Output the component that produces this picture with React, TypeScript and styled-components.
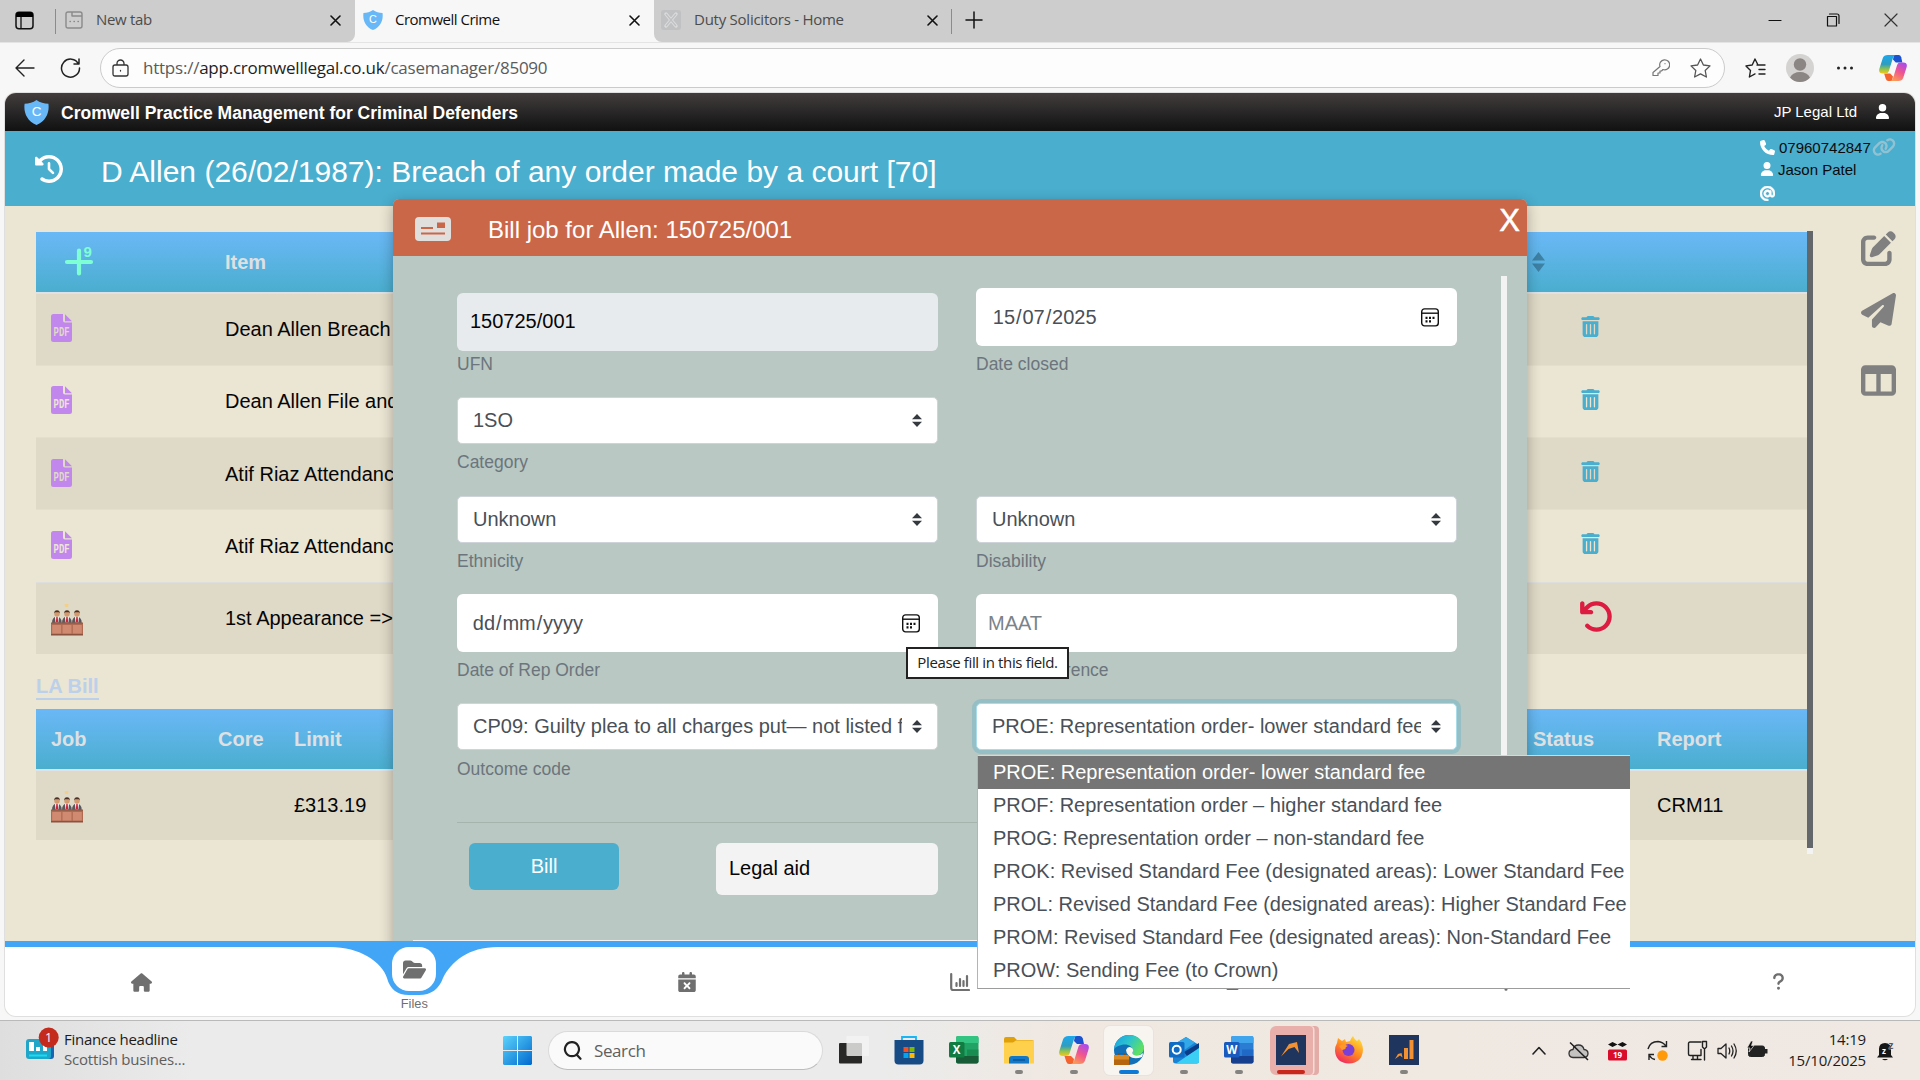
import React from "react";
import styled, { createGlobalStyle } from "styled-components";
import {
  FaPenToSquare, FaPaperPlane, FaTableColumns, FaTrashCan, FaArrowRotateLeft, FaUser, FaPhone, FaAt, FaLink,
  FaHouse, FaFolderOpen, FaCalendarXmark, FaClockRotateLeft, FaQuestion, FaMobile, FaExclamation,
} from "react-icons/fa6";

const sans = `"Liberation Sans", Arial, sans-serif`;
const ui = `"Open Sans", "Noto Sans", sans-serif`;
const blue = "#4aaece";

const Global = createGlobalStyle`
  * { box-sizing: border-box; }
  body { margin: 0; background: #f7f7f7; overflow: hidden; }
  svg { display: block; flex: none; }
`;

const Screen = styled.div`
  width: 1920px;
  height: 1080px;
  display: flex;
  flex-direction: column;
  background: #f7f7f7;
  font-family: ${sans};
  white-space: nowrap;
`;

const Gap = styled.div<{ $w: number }>`
  width: ${(p) => p.$w}px;
  flex: none;
`;

/* ---------- browser chrome ---------- */
const TabStrip = styled.div`
  height: 42px;
  flex: none;
  display: flex;
  align-items: center;
  background: #f7f7f7;
  font: 15px/22px ${ui};
`;
const StripPart = styled.div<{ $w?: number; $left?: boolean }>`
  ${(p) => (p.$w ? `width: ${p.$w}px;` : "flex: 1;")}
  height: 42px;
  display: flex;
  align-items: center;
  padding-bottom: 2px;
  background: #cdcdcd;
  border-radius: ${(p) => (p.$left ? "0 0 8px 0" : "0 0 0 8px")};
  color: #4c4c4c;
`;
const ActiveTab = styled.div`
  width: 299px;
  height: 42px;
  display: flex;
  align-items: center;
  padding: 0 14px 2px 8px;
  color: #111;
`;
const TabLabel = styled.span<{ $ls?: number }>`
  flex: 1;
  letter-spacing: ${(p) => p.$ls ?? -0.5}px;
  padding-bottom: 3px;
`;
const TabLabelBox = styled.div`
  width: 233px;
  display: flex;
`;
const Rule = styled.div`
  width: 1px;
  height: 25px;
  margin-top: 2px;
  background: #8b8b8b;
`;
const Toolbar = styled.div`
  height: 51px;
  flex: none;
  display: flex;
  align-items: center;
  border-top: 1px solid #e4e4e4;
  padding: 0 12px 0 15px;
`;
const Address = styled.div`
  width: 1625px;
  height: 40px;
  margin-left: 19px;
  border: 1px solid #cbcbcb;
  border-radius: 20px;
  background: #fdfdfd;
  display: flex;
  align-items: center;
  padding: 0 13px 0 11px;
`;
const Url = styled.span`
  flex: 1;
  margin-left: 14px;
  font: 17px/24px ${ui};
  letter-spacing: -0.23px;
  color: #5b5b5b;
  b { font-weight: 400; color: #1f1f1f; }
`;

/* ---------- page ---------- */
const Page = styled.div`
  position: relative;
  width: 1910px;
  height: 923px;
  flex: none;
  margin-left: 5px;
  border-radius: 11px;
  overflow: hidden;
  background: #ebe5d3;
  box-shadow: 0 0 0 1px #dfdfdf;
  display: flex;
  flex-direction: column;
`;
const BlackBar = styled.div`
  height: 38px;
  flex: none;
  display: flex;
  align-items: center;
  padding: 0 25px 0 19px;
  background: linear-gradient(#433d3d, #2b2929 45%, #111);
  color: #fff;
  font-size: 15px;
`;
const Brand = styled.div`
  flex: 1;
  margin-left: 12px;
  padding-top: 3px;
  font-weight: 700;
  font-size: 17.5px;
`;
const FirmName = styled.span`
  padding-bottom: 2px;
`;
const UserBadge = styled.div`
  padding-bottom: 2px;
`;
const TitleBar = styled.div`
  height: 75px;
  flex: none;
  display: flex;
  background: ${blue};
  color: #fff;
  padding: 0 20px 0 30px;
`;
const CaseTitle = styled.div`
  flex: 1;
  padding: 23px 0 0 38px;
  font-size: 30px;
  line-height: 36px;
`;
const Contact = styled.div`
  width: 135px;
  padding-top: 5px;
  font-size: 15px;
  color: #0a0a0a;
`;
const ContactLine = styled.div<{ $mt?: number }>`
  height: 22px;
  margin-top: ${(p) => p.$mt ?? 0}px;
  display: flex;
  align-items: center;
  gap: 4px;
  svg { color: #fff; }
  svg + span + svg { color: #92c2d2; margin-left: -3px; }
`;
const Main = styled.div`
  height: 735px;
  flex: none;
  display: flex;
  padding: 25px 19px 0 31px;
`;
const Tables = styled.div`
  width: 1771px;
  padding-top: 1px;
  display: flex;
  flex-direction: column;
`;
const HeadRow = styled.div`
  height: 62px;
  flex: none;
  display: flex;
  align-items: center;
  background: linear-gradient(#6ab8f7, ${blue});
  border-bottom: 2px solid #dee2e6;
  color: #dee0e2;
  font-size: 20px;
  font-weight: 700;
`;
const BodyRow = styled.div<{ $h: number; $shade?: boolean; $line?: boolean; $pt?: number }>`
  height: ${(p) => p.$h}px;
  flex: none;
  display: flex;
  border-top: ${(p) => (p.$line ? "1px solid #dedfdc" : "none")};
  background: ${(p) => (p.$shade ? "#dfd9c7" : "transparent")};
  font-size: 20px;
  line-height: 30px;
  color: #050505;
  padding-top: ${(p) => p.$pt ?? 20}px;
`;
const Cell = styled.div<{ $w: number; $pad?: number }>`
  width: ${(p) => p.$w}px;
  flex: none;
  padding-left: ${(p) => p.$pad ?? 0}px;
`;
const PlusCell = styled(Cell)`
  display: flex;
  align-items: center;
`;
const IconNudge = styled.div<{ $y: number }>`
  margin-top: ${(p) => p.$y}px;
`;
const SectionTitle = styled.div`
  width: 63px;
  height: 26px;
  margin: 20px 0 9px;
  border-bottom: 2px solid #bcd0ea;
  color: #bcd0ea;
  font-size: 20px;
  font-weight: 700;
  line-height: 24px;
`;
const ScrollTrack = styled.div`
  width: 6px;
  height: 623px;
  background: #f3f3f3;
`;
const ScrollThumb = styled.div`
  height: 617px;
  background: #646769;
`;
const SideTools = styled.div`
  margin-left: 48px;
  display: flex;
  flex-direction: column;
  color: #808080;
`;

/* ---------- dialog ---------- */
const Dialog = styled.div`
  position: absolute;
  left: 388px;
  top: 106px;
  width: 1134px;
  height: 742px;
  border-radius: 6px 6px 0 0;
  overflow: hidden;
  background: #b9c8c2;
  display: flex;
  flex-direction: column;
`;
const DialogShadow = styled.div`
  position: absolute;
  left: 388px;
  top: 106px;
  width: 1134px;
  height: 760px;
  border-radius: 6px;
  box-shadow: 0 4px 14px rgba(0, 0, 0, 0.3);
`;
const DialogHead = styled.div`
  height: 57px;
  flex: none;
  display: flex;
  background: #cb6749;
  color: #fff;
  padding: 0 7px 0 22px;
`;
const DialogTitle = styled.div`
  flex: 1;
  padding: 17px 0 0 37px;
  font-size: 24px;
  line-height: 28px;
`;
const DialogClose = styled.div`
  font-size: 31px;
  line-height: 44px;
  -webkit-text-stroke: 0.5px #fff;
`;
const DialogBody = styled.div`
  flex: 1;
  display: flex;
  padding: 20px 20px 0 64px;
`;
const Form = styled.div`
  width: 1000px;
  margin-right: 44px;
  padding-top: 12px;
`;
const FormRow = styled.div<{ $h: number }>`
  height: ${(p) => p.$h}px;
  display: flex;
  gap: 38px;
`;
const Field = styled.div<{ $top?: number }>`
  width: 481px;
  padding-top: ${(p) => p.$top ?? 0}px;
`;
const Input = styled.div<{ $bg?: string; $fg?: string; $pad?: number; $lift?: number }>`
  height: 58px;
  border-radius: 6px;
  background: ${(p) => p.$bg ?? "#fff"};
  color: ${(p) => p.$fg ?? "#495057"};
  padding: 0 18px ${(p) => p.$lift ?? 0}px ${(p) => p.$pad ?? 15}px;
  display: flex;
  justify-content: space-between;
  align-items: center;
  font-size: 20px;
`;
const DateParts = styled.span`
  i { font-style: normal; padding: 0 1px 0 0.8px; }
`;
const Select = styled.div<{ $focus?: boolean }>`
  height: 47px;
  border-radius: 5px;
  border: 1px solid ${(p) => (p.$focus ? "#a9dbe9" : "#ced4da")};
  box-shadow: ${(p) => (p.$focus ? "0 0 0 4px rgba(74,174,206,0.32)" : "none")};
  background: #fff;
  color: #495057;
  padding: 0 14px 0 15px;
  display: flex;
  align-items: center;
  font-size: 20px;
  line-height: 30px;
`;
const SelectText = styled.span`
  width: 429px;
  margin-right: 10px;
  padding-bottom: 1px;
  overflow: hidden;
`;
const Label = styled.div<{ $mt?: number }>`
  margin-top: ${(p) => p.$mt ?? 5}px;
  font-size: 17.5px;
  line-height: 26px;
  color: #6c757d;
`;
const FormFoot = styled.div`
  border-top: 1px solid #a6b4ae;
  padding: 20px 0 0 12px;
  display: flex;
  gap: 97px;
`;
const BillButton = styled.div`
  width: 150px;
  height: 47px;
  border-radius: 6px;
  background: ${blue};
  color: #fff;
  font-size: 20px;
  line-height: 47px;
  text-align: center;
`;
const Funding = styled.div`
  width: 222px;
  height: 52px;
  border-radius: 6px;
  background: #f3f3f3;
  color: #050505;
  font-size: 20px;
  line-height: 50px;
  padding-left: 13px;
`;
const BodyScroll = styled.div`
  width: 6px;
  height: 640px;
  background: #f3f3f3;
`;
const BottomScroll = styled.div`
  height: 1px;
  margin: 0 20px;
  background: #f3f3f3;
`;
const Options = styled.div`
  position: absolute;
  z-index: 3;
  left: 972px;
  top: 662px;
  width: 653px;
  height: 234px;
  overflow: hidden;
  background: #fff;
  border: 1px solid #b4b4b4;
  border-right: 0;
  border-top-color: #d7d7d7;
  border-bottom-color: #9c9c9c;
`;
const Option = styled.div<{ $on?: boolean }>`
  height: 33px;
  padding-left: 15px;
  font-size: 20px;
  line-height: 33px;
  background: ${(p) => (p.$on ? "#757575" : "transparent")};
  color: ${(p) => (p.$on ? "#fff" : "#495057")};
`;
const Tooltip = styled.div`
  position: absolute;
  z-index: 4;
  left: 901px;
  top: 554px;
  width: 163px;
  height: 32px;
  border: 2px solid #222;
  background: #fff;
  color: #222;
  font: 15px/27px ${ui};
  letter-spacing: -0.36px;
  text-align: center;
`;

/* ---------- bottom navigation ---------- */
const BottomNav = styled.div`
  position: relative;
  z-index: 2;
  height: 75px;
  flex: none;
  border-top: 6px solid #43a5f5;
  background: #fff;
  color: #6f6f6f;
  display: flex;
`;
const NavItem = styled.div<{ $pt?: number }>`
  flex: 1;
  display: flex;
  justify-content: center;
  padding-top: ${(p) => p.$pt ?? 25}px;
`;
const FilesItem = styled.div`
  flex: 1;
  display: flex;
  flex-direction: column;
  align-items: center;
  font-size: 12.8px;
`;
const Notch = styled.svg`
  position: absolute;
  top: -1px;
  left: 325px;
`;
const FilesBadge = styled.div`
  position: relative;
  width: 44px;
  height: 44px;
  margin-bottom: 5px;
  border-radius: 17px;
  background: #fff;
  display: flex;
  align-items: center;
  justify-content: center;
`;

/* ---------- taskbar ---------- */
const Taskbar = styled.div`
  height: 60px;
  flex: none;
  margin-top: 4px;
  border-top: 1px solid #b9b9b9;
  background: linear-gradient(90deg, #dedede, #ebebeb 10%, #ebebeb 46%, #f0e8e1 56%, #efe9e2 75%, #f0e8e3);
  display: flex;
  font-family: ${ui};
  color: #1c1c1c;
`;
const News = styled.div`
  width: 477px;
  display: flex;
  padding: 6px 0 0 26px;
`;
const NewsText = styled.div`
  margin-left: 4px;
  font-size: 15px;
  line-height: 20px;
  padding-top: 2px;
  letter-spacing: -0.28px;
  div + div { color: #5e5e5e; letter-spacing: -0.2px; }
`;
const WinButton = styled.div`
  width: 71px;
  padding: 15px 0 0 26px;
`;
const SearchBox = styled.div`
  width: 275px;
  height: 39px;
  margin-top: 10px;
  border: 1px solid #dadada;
  border-bottom-color: #bdbdbd;
  border-radius: 20px;
  background: #fafafa;
  display: flex;
  align-items: center;
  padding-left: 14px;
  gap: 12px;
  color: #5f5f5f;
  font-size: 17px;
  letter-spacing: -0.4px;
`;
const Apps = styled.div`
  display: flex;
  margin-left: 3px;
`;
const AppSlot = styled.div`
  width: 55px;
  height: 59px;
  display: flex;
  justify-content: center;
`;
const Tile = styled.div<{ $bg?: string; $edge?: string }>`
  width: 49px;
  height: 49px;
  margin-top: 5px;
  padding-top: 9px;
  border-radius: 6px;
  background: ${(p) => p.$bg ?? "transparent"};
  box-shadow: ${(p) => (p.$edge ? `0 0 0 1px ${p.$edge}` : "none")};
  display: flex;
  flex-direction: column;
  align-items: center;
`;
const StackedTile = styled(Tile)`
  width: 43px;
  margin-left: -5px;
  border-radius: 6px 4px 4px 6px;
  box-shadow: 1.5px 0 0 #f6dcd9, 6px 0 0 #e3aca7;
`;
const RunDot = styled.div<{ $w: number; $c: string }>`
  width: ${(p) => p.$w}px;
  height: 4px;
  border-radius: 2px;
  margin-top: 5px;
  background: ${(p) => p.$c};
`;
const Tray = styled.div`
  flex: 1;
  display: flex;
  align-items: center;
  justify-content: flex-end;
  padding-right: 25px;
`;
const Clock = styled.div`
  width: 98px;
  text-align: right;
  font-size: 15px;
  line-height: 20.5px;
  letter-spacing: -0.18px;
  padding-bottom: 2px;
`;

/* ---------- drawings ---------- */
const Stroke = ({ w, h, d, sw = 1.3, c = "#222" }: { w: number; h: number; d: string; sw?: number; c?: string }) => (
  <svg width={w} height={h} viewBox={`0 0 ${w} ${h}`} fill="none" stroke={c} strokeWidth={sw} strokeLinecap="round" strokeLinejoin="round">
    <path d={d} />
  </svg>
);
const CloseX = ({ s = 11, c = "#111", sw = 1.6 }) => <Stroke w={s} h={s} sw={sw} c={c} d={`M1 1L${s - 1} ${s - 1}M${s - 1} 1L1 ${s - 1}`} />;
const Shield = ({ w, h }: { w: number; h: number }) => (
  <svg width={w} height={h} viewBox="0 0 25 25">
    <path d="M12.5 0C9 2.6 5 3.6 .6 3.8C-.6 12 2.6 21 12.5 25C22.4 21 25.6 12 24.4 3.8C20 3.6 16 2.6 12.5 0Z" fill="#68b8f8" />
    <text x="12.5" y="16" textAnchor="middle" fontSize="13.5" fill="#fff" fontFamily="Liberation Sans">C</text>
  </svg>
);
const PdfFile = ({ bg }: { bg: string }) => (
  <svg width="21" height="28" viewBox="0 0 21 28">
    <path d="M2.500 0H12V6.500A2 2 0 0 0 14 8.500H21V25.500A2.500 2.500 0 0 1 18.500 28H2.500A2.500 2.500 0 0 1 0 25.500V2.500A2.500 2.500 0 0 1 2.500 0ZM14 0.300L21 7.200H14Z" fill="#c287ec" />
    <g transform="translate(10.600 21.500) scale(.66 1)">
      <text textAnchor="middle" fontSize="13.500" fontWeight="700" fontFamily="Liberation Mono" fill={bg}>PDF</text>
    </g>
  </svg>
);
const Jury = () => (
  <svg width="32" height="33" viewBox="0 0 32 33">
    <path d="M13.500 1h4l-.5 3h-3z" fill="#f3d083" />
    {[0, 10, 20].map((x) => (
      <g key={x} transform={`translate(${x} 0)`}>
        <path d="M1 20q0-6 4.800-6.500Q10.600 14 10.800 20z" fill="#5a585d" />
        <path d="M4 13.600h4l-.6 6H4.500z" fill="#fff" />
        <path d="M5.300 14h1.400l.5 5.500H4.800z" fill="#d0243a" />
        <circle cx="6" cy="11" r="2.700" fill="#d39a6d" />
        <path d="M3.200 10.500Q3.200 7.300 6 7.300T8.800 10.500L7.800 9.300H4.200Z" fill="#4b3023" />
      </g>
    ))}
    <rect x="0" y="20" width="32" height="12" fill="#b06a52" />
    <rect x="0" y="19.500" width="32" height="1.500" fill="#96604a" />
    {[1.200, 11.500, 21.800].map((x) => <rect key={x} x={x} y="22" width="9" height="8.500" fill="#d18a72" />)}
    <rect x="0" y="31" width="32" height="1.500" fill="#8a5340" />
  </svg>
);
const CalendarGlyph = () => (
  <svg width="18" height="19" viewBox="0 0 18 19" fill="none" stroke="#111" strokeWidth="1.400">
    <rect x=".7" y=".9" width="16.600" height="17" rx="2.800" />
    <path d="M1 5.200H17" />
    <path d="M4.500 9.800h2M8 9.800h2M11.500 9.800h2M4.500 13.400h2M8 13.400h2" strokeWidth="2.200" />
  </svg>
);
const UpDown = () => (
  <svg width="10" height="13" viewBox="0 0 10 13" fill="#343a40"><path d="M0 5.200L5 0L10 5.200ZM0 7.800L5 13L10 7.800Z" /></svg>
);
const Copilot = ({ s }: { s: number }) => (
  <svg width={s} height={s} viewBox="0 0 30 30">
    <defs>
      <linearGradient id="cpa" x1="0" y1="0" x2="0" y2="1"><stop offset="0" stopColor="#1ba8ee" /><stop offset=".5" stopColor="#2f9dc0" /><stop offset=".75" stopColor="#8cc152" /><stop offset="1" stopColor="#f6c915" /></linearGradient>
      <linearGradient id="cpb" x1=".8" y1="0" x2=".3" y2="1"><stop offset="0" stopColor="#a64bf0" /><stop offset=".5" stopColor="#f0558f" /><stop offset="1" stopColor="#fb9a55" /></linearGradient>
    </defs>
    <path d="M16 1h5q2 0 2.800 2.600L25 9h-7l-3-3z" fill="#1a52d0" />
    <path d="M14 29H10q-2 0-2.800-2.600L5.500 21H12l3 3z" fill="#f4632e" />
    <path d="M9.500 1H18q-2 0-3 3L10.500 18.500Q9.800 21 7 21H4Q-1 21 .5 15.500L4 4.500Q5.200 1 9.500 1Z" fill="url(#cpa)" />
    <path d="M20.500 29H12q2 0 3-3L19.500 11.500Q20.200 9 23 9H26Q31 9 29.500 14.500L26 25.500Q24.800 29 20.500 29Z" fill="url(#cpb)" />
  </svg>
);
const Office = ({ letter, dark, mid, light, tag }: { letter: string; dark: string; mid: string; light: string; tag: string }) => (
  <svg width="30" height="30" viewBox="0 0 30 30">
    <rect x="7" y="1" width="22.500" height="27.500" rx="2" fill={mid} />
    <path d="M7 3a2 2 0 0 1 2-2h18.500a2 2 0 0 1 2 2v5H7z" fill={light} />
    <path d="M7 21h22.500v5.500a2 2 0 0 1-2 2H9a2 2 0 0 1-2-2z" fill={dark} />
    <path d="M18 14.500h11.500V21H18z" fill={tag} opacity=".55" />
    <rect x="0" y="7" width="15.500" height="15.500" rx="1.500" fill={tag} />
    <text x="7.700" y="18.800" textAnchor="middle" fontSize="11.500" fontWeight="700" fill="#fff" fontFamily="Open Sans">{letter}</text>
  </svg>
);

/* ---------- data ---------- */
const docs: { name: string; h: number; pt: number }[] = [
  { name: "Dean Allen Breach", h: 71, pt: 20 },
  { name: "Dean Allen File and", h: 72, pt: 20 },
  { name: "Atif Riaz Attendance", h: 72, pt: 21 },
  { name: "Atif Riaz Attendance", h: 73, pt: 21 },
];
const options = [
  "PROE: Representation order- lower standard fee",
  "PROF: Representation order – higher standard fee",
  "PROG: Representation order – non-standard fee",
  "PROK: Revised Standard Fee (designated areas): Lower Standard Fee",
  "PROL: Revised Standard Fee (designated areas): Higher Standard Fee",
  "PROM: Revised Standard Fee (designated areas): Non-Standard Fee",
  "PROW: Sending Fee (to Crown)",
];

const SelectField = ({ value, label, focus, mt }: { value: string; label?: string; focus?: boolean; mt?: number }) => (
  <Field>
    <Select $focus={focus}><SelectText>{value}</SelectText><UpDown /></Select>
    {label && <Label $mt={mt}>{label}</Label>}
  </Field>
);

const Chrome = () => (
  <>
    <TabStrip>
      <StripPart $w={355} $left>
        <Gap $w={15} />
        <svg width="19" height="19" viewBox="0 0 19 19"><rect x="1" y="1.300" width="17" height="16.500" rx="3" fill="none" stroke="#111" strokeWidth="1.500" /><path d="M1 6V4a3 3 0 0 1 3-3h11a3 3 0 0 1 3 3v2z" fill="#000" /><path d="M6 6V18" stroke="#111" strokeWidth="1.300" /></svg>
        <Gap $w={21} /><Rule /><Gap $w={9} />
        <Stroke w={18} h={18} c="#8a8a8a" sw={1.400} d="M3 1H15Q17 1 17 3V15Q17 17 15 17H3Q1 17 1 15V3Q1 1 3 1ZM7 1V5H17M5 10.500h.4M9 10.500h.4M13 10.500h.4" />
        <Gap $w={13} /><TabLabel $ls={-0.3}>New tab</TabLabel><CloseX /><Gap $w={14} />
      </StripPart>
      <ActiveTab><Shield w={20} h={20} /><Gap $w={12} /><TabLabel>Cromwell Crime</TabLabel><CloseX /></ActiveTab>
      <StripPart>
        <Gap $w={7} />
        <svg width="20" height="20" viewBox="0 0 20 20"><rect width="20" height="20" rx="3" fill="#bfc1c3" /><path d="M5 4L15 16M15 4L5 16" stroke="#dcdcdc" strokeWidth="3.500" strokeLinecap="round" /><path d="M5 4L15 16M15 4L5 16" stroke="#bfc1c3" strokeWidth="1.300" /></svg>
        <Gap $w={13} /><TabLabelBox><TabLabel $ls={-0.25}>Duty Solicitors - Home</TabLabel></TabLabelBox><CloseX />
        <Gap $w={13} /><Rule /><Gap $w={13} /><Stroke w={18} h={18} sw={1.500} c="#111" d="M9 1V17M1 9H17" />
        <Gap $w={785} /><Stroke w={14} h={14} sw={1.200} c="#111" d="M1 7.500H13" />
        <Gap $w={44} /><Stroke w={14} h={14} sw={1.200} c="#111" d="M1.500 3.500h9v9.500h-9zM3.500 1H11Q13 1 13 3V10.500" />
        <Gap $w={44} /><CloseX s={14} sw={1.200} c="#333" />
      </StripPart>
    </TabStrip>
    <Toolbar>
      <Stroke w={20} h={18} d="M19 9H1M9 1L1 9L9 17" sw={1.400} /><Gap $w={25} />
      <Stroke w={21} h={20} d="M18.500 6A9 9 0 1 0 19.500 10M19 1V6H14" sw={1.500} />
      <Address>
        <Stroke w={17} h={18} c="#333" sw={1.300} d="M3 6H14Q16 6 16 8V15Q16 17 14 17H3Q1 17 1 15V8Q1 6 3 6ZM5 6V4.500A3.500 3.500 0 0 1 12 4.500V6M8.500 11.500v.5" />
        <Url>https://<b>app.cromwelllegal.co.uk</b>/casemanager/85090</Url>
        <Stroke w={18} h={18} c="#777" sw={1.200} d="M8 7.500A5 5 0 1 1 11 10.500L9.500 12H8v2H6v2.500H1V13.500L8 7.500M13 4.500v.2" /><Gap $w={20} />
        <Stroke w={21} h={20} c="#555" sw={1.300} d="M10.500 1L13.400 7L20 7.900L15.200 12.500L16.400 19L10.500 15.900L4.600 19L5.800 12.500L1 7.900L7.600 7Z" />
      </Address>
      <Gap $w={20} />
      <Stroke w={21} h={20} c="#222" sw={1.400} d="M12 7H20M14 11.500H20M14 16H20M12.500 6L10 1L7.200 7L1 7.900L5.500 12.500L4.400 19L10 15.900" /><Gap $w={20} />
      <svg width="28" height="28" viewBox="0 0 28 28"><circle cx="14" cy="14" r="14" fill="#d5d3d1" /><circle cx="14" cy="10.500" r="6.200" fill="#8b8683" /><path d="M4 23.500Q7 18 14 18T24 23.500Q20 28 14 28T4 23.500Z" fill="#8b8683" /></svg>
      <Gap $w={22} />
      <svg width="18" height="6" viewBox="0 0 18 6" fill="#222"><circle cx="2.500" cy="3" r="1.500" /><circle cx="9" cy="3" r="1.500" /><circle cx="15.500" cy="3" r="1.500" /></svg>
      <Gap $w={25} /><Copilot s={28} />
    </Toolbar>
  </>
);

const BillDialog = () => (
  <>
    <DialogShadow />
    <Dialog>
      <DialogHead>
        <svg width="36" height="57" viewBox="0 0 36 57"><rect y="18" width="36" height="24" rx="4" fill="#e0dfde" /><path d="M6 28H18V30H6ZM22 23.500H30V29H22ZM6 33.500H30V35.500H6Z" fill="#cb6749" /></svg>
        <DialogTitle>Bill job for Allen: 150725/001</DialogTitle>
        <DialogClose>X</DialogClose>
      </DialogHead>
      <DialogBody>
        <Form>
          <FormRow $h={109}>
            <Field $top={5}><Input $bg="#e8ebee" $fg="#050505" $pad={13} $lift={2}>150725/001</Input><Label $mt={0}>UFN</Label></Field>
            <Field><Input $pad={16}><DateParts><i>15</i>/<i>07</i>/<i>2025</i></DateParts><CalendarGlyph /></Input><Label>Date closed</Label></Field>
          </FormRow>
          <FormRow $h={99}><SelectField value="1SO" label="Category" /></FormRow>
          <FormRow $h={98}><SelectField value="Unknown" label="Ethnicity" /><SelectField value="Unknown" label="Disability" /></FormRow>
          <FormRow $h={109}>
            <Field><Input><DateParts><i>dd</i>/<i>mm</i>/<i>yyyy</i></DateParts><CalendarGlyph /></Input><Label>Date of Rep Order</Label></Field>
            <Field><Input $fg="#7b838a" $pad={12}>MAAT</Input><Label>MAAT Reference</Label></Field>
          </FormRow>
          <FormRow $h={119}>
            <SelectField value="CP09: Guilty plea to all charges put— not listed for trial" label="Outcome code" mt={6} />
            <SelectField value={options[0]} focus />
          </FormRow>
          <FormFoot><BillButton>Bill</BillButton><Funding>Legal aid</Funding></FormFoot>
        </Form>
        <BodyScroll />
      </DialogBody>
      <BottomScroll />
    </Dialog>
    <Options>{options.map((o, i) => <Option key={o} $on={i === 0}>{o}</Option>)}</Options>
    <Tooltip>Please fill in this field.</Tooltip>
  </>
);

const CaseTables = () => (
  <Tables>
    <HeadRow>
      <PlusCell $w={189} $pad={28}>
        <svg width="32" height="34" viewBox="0 0 32 34"><path d="M15 5.500V28.500M3 17H27" stroke="#7fffd4" strokeWidth="4.200" strokeLinecap="round" /><text x="19.500" y="12" fontSize="15" fontWeight="700" fill="#7fffd4" fontFamily="Liberation Sans">9</text></svg>
      </PlusCell>
      <Cell $w={1307}>Item</Cell>
      <svg width="13" height="20" viewBox="0 0 13 20" fill="#3d81a4"><path d="M0 8.500L6.500 0L13 8.500ZM0 11.500L6.500 20L13 11.500Z" /></svg>
    </HeadRow>
    {docs.map((d, i) => (
      <BodyRow key={i} $h={d.h} $shade={i % 2 === 0} $line={i > 0} $pt={d.pt}>
        <Cell $w={189} $pad={15}><PdfFile bg={i % 2 ? "#ebe5d3" : "#dfd9c7"} /></Cell>
        <Cell $w={1355}>{d.name}</Cell>
        <IconNudge $y={i === 1 ? 3 : 2}><FaTrashCan size={21} color={blue} /></IconNudge>
      </BodyRow>
    ))}
    <BodyRow $h={72} $shade $line>
      <Cell $w={189} $pad={15}><Jury /></Cell>
      <Cell $w={1354}>1st Appearance =&gt;</Cell>
      <IconNudge $y={-4}><FaArrowRotateLeft size={35} color="#dc1c40" /></IconNudge>
    </BodyRow>
    <SectionTitle>LA Bill</SectionTitle>
    <HeadRow>
      <Cell $w={182} $pad={15}>Job</Cell><Cell $w={76}>Core</Cell><Cell $w={1239}>Limit</Cell><Cell $w={124}>Status</Cell><Cell $w={100}>Report</Cell>
    </HeadRow>
    <BodyRow $h={69} $shade $pt={19}>
      <Cell $w={258} $pad={15}><Jury /></Cell><Cell $w={1363}>£313.19</Cell><Cell $w={100}>CRM11</Cell>
    </BodyRow>
  </Tables>
);

const navGrey = "#707070";
const Nav = () => (
  <BottomNav>
    <NavItem><FaHouse size={21} /></NavItem>
    <FilesItem>
      <Notch width="168" height="50" viewBox="0 0 168 50"><path d="M0 0H168V1C138 1 121 16 113 32C109 43 101 49 89 49H79C67 49 60 43 57 32C52 16 30 1 0 1Z" fill="#43a5f5" /></Notch>
      <FilesBadge><FaFolderOpen size={23} /></FilesBadge>
      Files
    </FilesItem>
    <NavItem><FaCalendarXmark size={20} /></NavItem>
    <NavItem><Stroke w={20} h={20} c={navGrey} sw={2.200} d="M1.200 2V16Q1.200 18 3.200 18H19M6.500 14V11M10 14V7M13.500 14V9M17 14V4" /></NavItem>
    <NavItem $pt={24}><FaMobile size={19} /></NavItem>
    <NavItem><FaExclamation size={20} /></NavItem>
    <NavItem><FaQuestion size={19} /></NavItem>
  </BottomNav>
);

const BottomBar = () => (
  <Taskbar>
    <News>
      <svg width="34" height="34" viewBox="0 0 34 34">
        <rect x="5" y="12" width="23" height="20" rx="3" fill="#1765b5" /><rect x="0" y="12" width="25" height="20" rx="3" fill="#20a6c9" />
        <path d="M3 15h5v9H3zM10 20h4v4h-4zM17 17h4v7h-4z" fill="#fff" /><path d="M3 28.500h18" stroke="#12dff2" strokeWidth="2" />
        <circle cx="22.700" cy="10.500" r="10" fill="#c42b1c" /><text x="22.700" y="15" textAnchor="middle" fontSize="12.500" fill="#fff" fontFamily="Open Sans">1</text>
      </svg>
      <NewsText><div>Finance headline</div><div>Scottish busines...</div></NewsText>
    </News>
    <WinButton>
      <svg width="29" height="29" viewBox="0 0 29 29"><defs><linearGradient id="win" x1="0" y1="0" x2="1" y2="1"><stop offset="0" stopColor="#5cd3fb" /><stop offset="1" stopColor="#0069cf" /></linearGradient></defs><path d="M1 0H14V14H0V1ZM15 0H28L29 1V14H15ZM0 15H14V29H1L0 28ZM15 15H29V28L28 29H15Z" fill="url(#win)" /></svg>
    </WinButton>
    <SearchBox><Stroke w={19} h={19} sw={2.200} c="#222" d="M9 1.200A7 7 0 1 1 8.900 1.200M14 14L17.500 17.800" /><span>Search</span></SearchBox>
    <Apps>
      <AppSlot><Tile><svg width="30" height="30" viewBox="0 0 30 30"><rect x="0" y="8" width="23" height="20.500" rx="1" fill="#282827" /><rect x="7.500" y="1" width="22.500" height="20" rx="1" fill="#f4f4f4" opacity=".8" /></svg></Tile></AppSlot>
      <AppSlot><Tile><svg width="30" height="30" viewBox="0 0 30 30"><path d="M8 6V2H22V6" stroke="#19b5f4" strokeWidth="1.800" fill="none" /><path d="M.5 5h29v20.500a4 4 0 0 1-4 4h-21a4 4 0 0 1-4-4z" fill="#174b86" /><path d="M9.500 12h5v5h-5z" fill="#f25022" /><path d="M15.500 12h5v5h-5z" fill="#7fba00" /><path d="M9.500 18h5v5h-5z" fill="#00a4ef" /><path d="M15.500 18h5v5h-5z" fill="#ffb900" /></svg></Tile></AppSlot>
      <AppSlot><Tile><Office letter="X" dark="#185c37" mid="#21a366" light="#33c481" tag="#107c41" /></Tile></AppSlot>
      <AppSlot><Tile><svg width="30" height="30" viewBox="0 0 30 30"><path d="M0 4Q0 2 2 2H10L13 5H28Q30 5 30 7V8H0Z" fill="#dfa00b" /><path d="M0 7.500L9 7.500L12 5.500H30V28.500H0Z" fill="#ffd04c" /><path d="M5 28.500V24Q5 21 8 21H22Q25 21 25 24V28.500Z" fill="#1378c8" /><path d="M9 25h12" stroke="#0c4f92" strokeWidth="1.300" /></svg><RunDot $w={8} $c="#858380" /></Tile></AppSlot>
      <AppSlot><Tile><Copilot s={30} /><RunDot $w={8} $c="#858380" /></Tile></AppSlot>
      <AppSlot><Tile $bg="#f8f5f1" $edge="#e9e3dd">
        <svg width="30" height="30" viewBox="0 0 30 30"><defs><linearGradient id="edg" x1="0" y1="0" x2="1" y2=".5"><stop offset="0" stopColor="#1b9de2" /><stop offset=".5" stopColor="#2bc3cf" /><stop offset="1" stopColor="#5fe062" /></linearGradient></defs><circle cx="15" cy="15" r="15" fill="#1170b8" /><path d="M0 14C1 5 8 0 15 0C24 0 30 6 30 13C30 18 26 20.500 22 20.500C18 20.500 18 18.500 19 16.500C19 12 15 9.500 11 9.500C6 9.500 1.500 12 0 14Z" fill="url(#edg)" /><path d="M12 15Q14 10.500 18 13Q20 15 18.500 17.500Q18 20.500 23 20.500Q27 20 29 18Q29 20 28 22Q20 25 15 21Q12 18 12 15Z" fill="#f8f5f1" /><rect x="0" y="20" width="15" height="10" fill="#b5660f" /><rect x="0" y="20" width="15" height="4.500" fill="#d98a24" /><path d="M4.500 20v-1.500h6V20" stroke="#8a4b0b" fill="none" /></svg>
        <RunDot $w={20} $c="#0f7ad6" />
      </Tile></AppSlot>
      <AppSlot><Tile><svg width="30" height="30" viewBox="0 0 30 30"><path d="M4 10L17 2L30 10V26Q30 28.500 27.500 28.500H7Q4 28.500 4 26Z" fill="#1a83d4" /><path d="M4 10L17 2L26 7.500L14 16Z" fill="#32a8e8" /><path d="M15 17L30 8V14L18 21Z" fill="#0b3d86" /><path d="M30 13V26Q30 28.500 27.500 28.500H7L30 13Z" fill="#3ccff5" /><rect x="0" y="7" width="15.500" height="15.500" rx="1.500" fill="#0f6cc4" /><circle cx="7.700" cy="14.700" r="4" fill="none" stroke="#fff" strokeWidth="2" /></svg><RunDot $w={8} $c="#858380" /></Tile></AppSlot>
      <AppSlot><Tile><Office letter="W" dark="#173f90" mid="#2b7cd3" light="#41a5ee" tag="#185abd" /><RunDot $w={8} $c="#858380" /></Tile></AppSlot>
      <AppSlot><StackedTile $bg="#e8afab"><svg width="30" height="30" viewBox="0 0 30 30"><rect width="30" height="30" fill="#1f355e" /><path d="M5 21.500L13 9L21 7L23 18L18.500 12L12.500 14Z" fill="#f19133" /></svg><RunDot $w={28} $c="#c8281c" /></StackedTile></AppSlot>
      <AppSlot><Tile><svg width="30" height="30" viewBox="0 0 30 30"><defs><linearGradient id="ffx" x1=".8" y1="0" x2=".2" y2="1"><stop offset="0" stopColor="#ffe23d" /><stop offset=".5" stopColor="#ff8a1e" /><stop offset="1" stopColor="#f0206a" /></linearGradient></defs><path d="M3 8L4 3L8 6L11 4L12 7L16 6Q17 3 19 1Q20 4 23 6L25 4Q29 9 29 15Q28 28 15 28.500Q2 28 1 16Q1 11 3 8Z" fill="url(#ffx)" /><circle cx="14.500" cy="15" r="6" fill="#7b3fd6" /><path d="M5 11Q9 8 14 11Q11 12 11.500 14L8 15Z" fill="#ff9a2a" /></svg></Tile></AppSlot>
      <AppSlot><Tile><svg width="30" height="30" viewBox="0 0 30 30"><rect width="30" height="30" fill="#1f355e" /><path d="M15 13h4v11h-4zM20.500 5h4v19h-4zM6 24L9 19L12.500 18L13.500 22.500L11 20.500Z" fill="#f19133" /></svg><RunDot $w={8} $c="#858380" /></Tile></AppSlot>
    </Apps>
    <Tray>
      <Stroke w={14} h={9} sw={1.600} d="M1 8L7 1.500L13 8" /><Gap $w={22} />
      <svg width="21" height="20" viewBox="0 0 21 20"><path d="M5 16.500Q1 16 1 12.500T5 8.500Q6 4 10.500 4T16 8.500Q20 9 20 12.500T16 16.500Z" fill="#c4c2c0" stroke="#333" strokeWidth="1.300" /><path d="M2 1.500L20 19" stroke="#1c1c1c" strokeWidth="1.500" /></svg><Gap $w={19} />
      <svg width="19" height="20" viewBox="0 0 19 20"><path d="M0 3.500L4.500 1L9.500 3.500L14.500 1L19 3.500L14.500 6L9.500 3.500L4.500 6Z" fill="#111" /><rect y="8.500" width="19" height="11" rx="1.500" fill="#da0c2c" /><text x="9.500" y="16.900" textAnchor="middle" fontSize="8" fontWeight="700" fill="#fff" fontFamily="Open Sans">19</text></svg><Gap $w={20} />
      <svg width="21" height="21" viewBox="0 0 21 21" fill="none" stroke="#222" strokeWidth="1.400"><path d="M1 9Q3 1.500 11 1.500Q16 2 19 6M19.500 1V6.500H14.500M2 20V14.500H7M2.500 15.500Q4 18.500 8 19.500" /><circle cx="15.500" cy="15.500" r="5.200" fill="#ff9a0a" stroke="none" /></svg><Gap $w={19} />
      <Stroke w={21} h={21} sw={1.400} d="M14 2H3Q1.500 2 1.500 3.500V14Q1.500 15.500 3 15.500H14V9.500M6 15.500V19.500M10.500 15.500V19.500M4.500 19.500H14M15.500 1.500H19.500V7L17.500 9L15.500 7ZM17.500 9V20" /><Gap $w={9} />
      <Stroke w={21} h={20} sw={1.300} d="M1 7.500H4L9 3V17L4 12.500H1ZM12 7Q13.500 10 12 13M14.500 5Q17.500 10 14.500 15M17 3Q21.500 10 17 17" /><Gap $w={9} />
      <svg width="21" height="20" viewBox="0 0 21 20"><rect x="1.500" y="5" width="16" height="10.500" rx="2" fill="#222" stroke="#222" /><rect x="18" y="8" width="2.500" height="4.500" fill="#222" /><path d="M4 0L0 7H3L2 11L7 4.500H4.500L6 0Z" fill="#111" stroke="#efe9e4" strokeWidth=".7" /></svg>
      <Clock><div>14:19</div><div>15/10/2025</div></Clock><Gap $w={10} />
      <svg width="19" height="20" viewBox="0 0 19 20"><path d="M3 14V8Q3 2 9 2T15 8V14L17 16.500H1ZM6 18h6q-3 2.500-6 0Z" fill="#161616" /><text x="6" y="12.500" fontSize="8" fontWeight="700" fill="#fff" fontFamily="Open Sans">z</text><text x="12.500" y="7.500" fontSize="10" fontWeight="700" fill="#161616" stroke="#efe9e4" strokeWidth=".3" fontFamily="Open Sans">z</text></svg>
    </Tray>
  </Taskbar>
);

export default function App() {
  return (
    <Screen>
      <Global />
      <Chrome />
      <Page>
        <BlackBar>
          <Shield w={25} h={25} />
          <Brand>Cromwell Practice Management for Criminal Defenders</Brand>
          <FirmName>JP Legal Ltd</FirmName><Gap $w={18} /><UserBadge><FaUser size={15} /></UserBadge>
        </BlackBar>
        <TitleBar>
          <svg width="28" height="75" viewBox="0 0 28 75"><g transform="translate(0 24)"><FaClockRotateLeft size={28} /></g></svg>
          <CaseTitle>D Allen (26/02/1987): Breach of any order made by a court [70]</CaseTitle>
          <Contact>
            <ContactLine><FaPhone size={15} /><span>07960742847</span><FaLink size={24} /></ContactLine>
            <ContactLine><FaUser size={14} /><span>Jason Patel</span></ContactLine>
            <ContactLine $mt={2}><FaAt size={15} strokeWidth={20} stroke="#fff" /></ContactLine>
          </Contact>
        </TitleBar>
        <Main>
          <CaseTables />
          <ScrollTrack><ScrollThumb /></ScrollTrack>
          <SideTools>
            <FaPenToSquare size={35} /><svg width="1" height="27" /><FaPaperPlane size={35} /><svg width="1" height="35" /><FaTableColumns size={35} />
          </SideTools>
        </Main>
        <BillDialog />
        <Nav />
      </Page>
      <BottomBar />
    </Screen>
  );
}
